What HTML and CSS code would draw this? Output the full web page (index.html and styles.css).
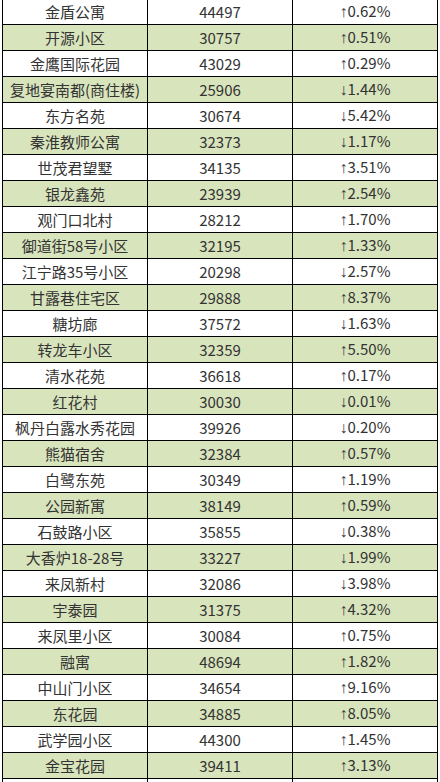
FILE: index.html
```html
<!DOCTYPE html>
<html lang="zh-CN">
<head>
<meta charset="utf-8">
<link rel="stylesheet" href="styles.css">
</head>
<body>
<table class="grid">
<colgroup><col class="c"><col class="c"><col class="c"></colgroup>
<tbody>
<tr><td>金盾公寓</td><td>44497</td><td><span class="ar">↑</span>0.62%</td></tr>
<tr class="g"><td>开源小区</td><td>30757</td><td><span class="ar">↑</span>0.51%</td></tr>
<tr><td>金鹰国际花园</td><td>43029</td><td><span class="ar">↑</span>0.29%</td></tr>
<tr class="g"><td>复地宴南都(商住楼)</td><td>25906</td><td><span class="ar">↓</span>1.44%</td></tr>
<tr><td>东方名苑</td><td>30674</td><td><span class="ar">↓</span>5.42%</td></tr>
<tr class="g"><td>秦淮教师公寓</td><td>32373</td><td><span class="ar">↓</span>1.17%</td></tr>
<tr><td>世茂君望墅</td><td>34135</td><td><span class="ar">↑</span>3.51%</td></tr>
<tr class="g"><td>银龙鑫苑</td><td>23939</td><td><span class="ar">↑</span>2.54%</td></tr>
<tr><td>观门口北村</td><td>28212</td><td><span class="ar">↑</span>1.70%</td></tr>
<tr class="g"><td>御道街58号小区</td><td>32195</td><td><span class="ar">↑</span>1.33%</td></tr>
<tr><td>江宁路35号小区</td><td>20298</td><td><span class="ar">↓</span>2.57%</td></tr>
<tr class="g"><td>甘露巷住宅区</td><td>29888</td><td><span class="ar">↑</span>8.37%</td></tr>
<tr><td>糖坊廊</td><td>37572</td><td><span class="ar">↓</span>1.63%</td></tr>
<tr class="g"><td>转龙车小区</td><td>32359</td><td><span class="ar">↑</span>5.50%</td></tr>
<tr><td>清水花苑</td><td>36618</td><td><span class="ar">↑</span>0.17%</td></tr>
<tr class="g"><td>红花村</td><td>30030</td><td><span class="ar">↓</span>0.01%</td></tr>
<tr><td>枫丹白露水秀花园</td><td>39926</td><td><span class="ar">↓</span>0.20%</td></tr>
<tr class="g"><td>熊猫宿舍</td><td>32384</td><td><span class="ar">↑</span>0.57%</td></tr>
<tr><td>白鹭东苑</td><td>30349</td><td><span class="ar">↑</span>1.19%</td></tr>
<tr class="g"><td>公园新寓</td><td>38149</td><td><span class="ar">↑</span>0.59%</td></tr>
<tr><td>石鼓路小区</td><td>35855</td><td><span class="ar">↓</span>0.38%</td></tr>
<tr class="g"><td>大香炉18-28号</td><td>33227</td><td><span class="ar">↓</span>1.99%</td></tr>
<tr><td>来凤新村</td><td>32086</td><td><span class="ar">↓</span>3.98%</td></tr>
<tr class="g"><td>宇泰园</td><td>31375</td><td><span class="ar">↑</span>4.32%</td></tr>
<tr><td>来凤里小区</td><td>30084</td><td><span class="ar">↑</span>0.75%</td></tr>
<tr class="g"><td>融寓</td><td>48694</td><td><span class="ar">↑</span>1.82%</td></tr>
<tr><td>中山门小区</td><td>34654</td><td><span class="ar">↑</span>9.16%</td></tr>
<tr class="g"><td>东花园</td><td>34885</td><td><span class="ar">↑</span>8.05%</td></tr>
<tr><td>武学园小区</td><td>44300</td><td><span class="ar">↑</span>1.45%</td></tr>
<tr class="g"><td>金宝花园</td><td>39411</td><td><span class="ar">↑</span>3.13%</td></tr>
<tr class="tail"><td></td><td></td><td></td></tr>
</tbody>
</table>
</body>
</html>
```
FILE: styles.css
```css
html, body {
  margin: 0;
  padding: 0;
  background: #ffffff;
}
body {
  overflow: hidden;
  height: 782px;
  font-family: "Noto Sans CJK SC", "Noto Sans", sans-serif;
  color: #333333;
  font-size: 15px;
}
.grid {
  border-collapse: collapse;
  table-layout: fixed;
  margin: -2px 0 0 2px;
}
.c {
  width: 145px;
}
.grid td {
  border: 1px solid #000000;
  height: 24px;
  padding: 0;
  text-align: center;
  vertical-align: middle;
  line-height: 24px;
  white-space: nowrap;
  overflow: hidden;
}
.grid tr.g td {
  background: #d8e4bc;
}
.grid tr.tail td {
  height: 20px;
}
.ar {
  font-family: "Liberation Sans", sans-serif;
  font-size: 16px;
  color: #3c3c3c;
}
```
